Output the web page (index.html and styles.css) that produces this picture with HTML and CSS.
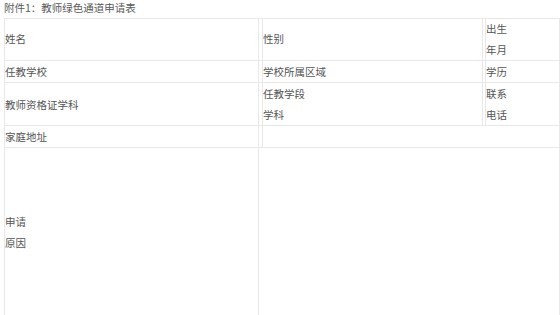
FILE: index.html
```html
<!DOCTYPE html>
<html lang="zh-CN">
<head>
<meta charset="utf-8">
<title>教师绿色通道申请表</title>
<link rel="stylesheet" href="styles.css">
</head>
<body>
<div class="page">
  <p class="title">附件1：教师绿色通道申请表</p>
  <table class="form">
    <colgroup>
      <col class="c-main">
      <col class="c-gap1">
      <col class="c-mid">
      <col class="c-gap2">
      <col class="c-end">
    </colgroup>
    <tbody>
      <tr class="first">
        <td>姓名</td>
        <td></td>
        <td>性别</td>
        <td></td>
        <td>出生<br>年月</td>
      </tr>
      <tr>
        <td>任教学校</td>
        <td></td>
        <td>学校所属区域</td>
        <td></td>
        <td>学历</td>
      </tr>
      <tr>
        <td>教师资格证学科</td>
        <td></td>
        <td>任教学段<br>学科</td>
        <td></td>
        <td>联系<br>电话</td>
      </tr>
      <tr>
        <td>家庭地址</td>
        <td></td>
        <td colspan="3"></td>
      </tr>
      <tr class="tall">
        <td>申请<br>原因</td>
        <td colspan="4"></td>
      </tr>
    </tbody>
  </table>
</div>
</body>
</html>
```

FILE: styles.css
```css
html, body {
  margin: 0;
  padding: 0;
  background: #ffffff;
}

body {
  font-family: "Noto Sans CJK SC", "Noto Sans", sans-serif;
  color: #555555;
  font-size: 10.5px;
}

.page {
  padding-left: 4px;
  width: 556px;
}

.title {
  margin: 0;
  height: 18px;
  line-height: 16px;
  color: #5a5a5a;
}

.form {
  width: 555px;
  table-layout: fixed;
  border-collapse: collapse;
}

.c-main { width: 254px; }
.c-gap1 { width: 4px; }
.c-mid { width: 220px; }
.c-gap2 { width: 3px; }
.c-end { width: 74px; }

.form td {
  border: 1px solid #e8e8e8;
  padding: 0;
  line-height: 21px;
  vertical-align: middle;
  white-space: nowrap;
}

.form tr.first td {
  line-height: 20.5px;
}

.form tr.tall td {
  height: 168px;
}
```
